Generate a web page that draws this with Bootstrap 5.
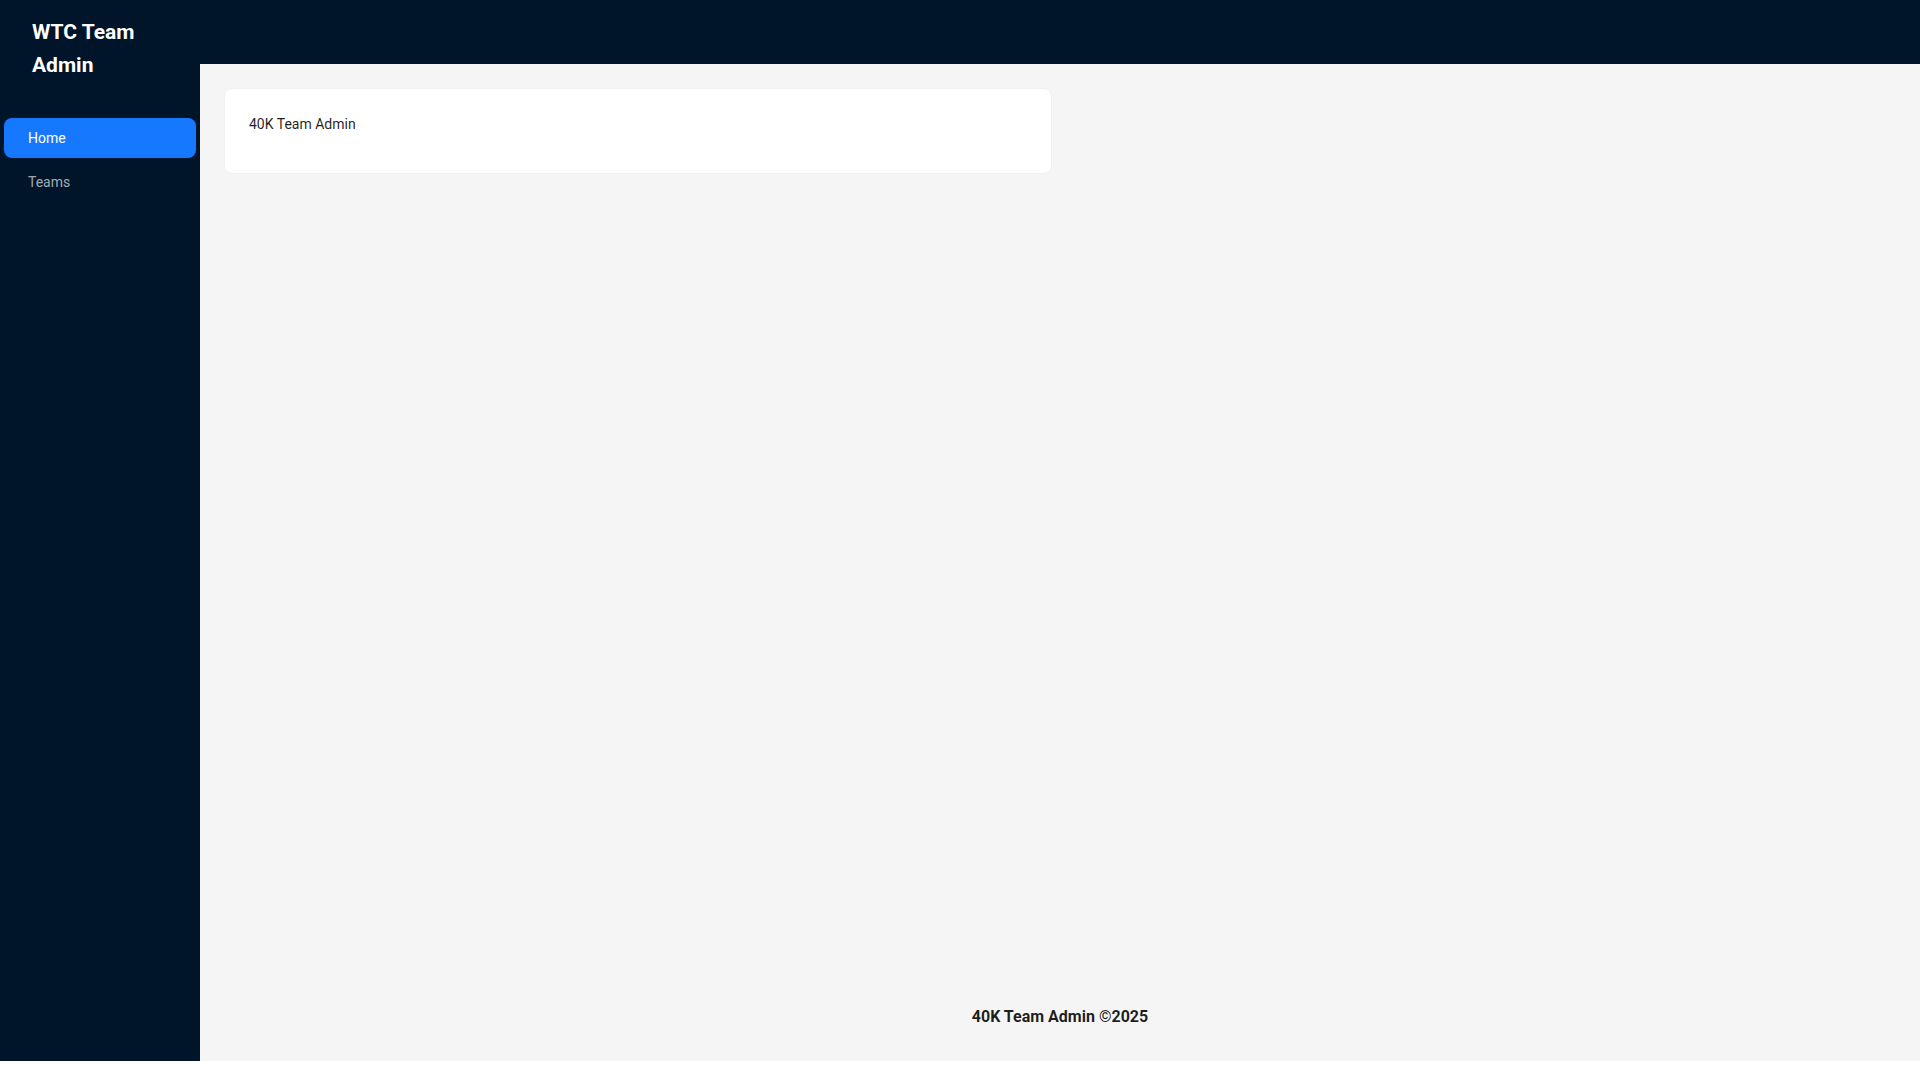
<!DOCTYPE html>
<html lang="en">
<head>
<meta charset="utf-8">
<meta name="viewport" content="width=device-width, initial-scale=1">
<title>WTC Team Admin</title>
<link href="https://cdn.jsdelivr.net/npm/bootstrap@5.3.0/dist/css/bootstrap.min.css" rel="stylesheet">
<style>
body { font-family: Roboto, "Liberation Sans", sans-serif; font-size: 14px; line-height: 22px; color: rgba(0,0,0,.88); }
.app-shell { min-height: calc(100vh - 19px); background: #f5f5f5; }
.app-sider { width: 200px; background: #001529; }
.app-brand { padding: 16px 32px; font-size: 21px; line-height: 33px; }
.app-menu { padding: 4px; margin-top: 16px; gap: 4px; }
.app-menu .nav-link { height: 40px; padding: 0 24px; line-height: 40px; border-radius: 8px; color: rgba(255,255,255,.65); }
.app-menu .nav-link.active { background: #1677ff; color: #fff; }
.app-header { height: 64px; background: #001529; }
.app-content { padding: 24px; }
.app-panel { padding: 24px; border: 1px solid #f0f0f0; border-radius: 8px; }
.app-panel p { margin-bottom: 14px; }
.app-footer { padding: 24px 48px 32px; font-size: 16px; line-height: 25px; }
</style>
</head>
<body>
<div class="app-shell d-flex">
  <aside class="app-sider flex-shrink-0">
    <div class="app-brand fw-bold text-white">WTC Team Admin</div>
    <nav class="app-menu nav flex-column" aria-label="Main">
      <a class="nav-link active" aria-current="page" href="#">Home</a>
      <a class="nav-link" href="#">Teams</a>
    </nav>
  </aside>
  <div class="d-flex flex-column flex-grow-1">
    <header class="app-header"></header>
    <main class="app-content flex-grow-1">
      <div class="row gx-3">
        <div class="col-6">
          <section class="app-panel bg-white"><p>40K Team Admin</p></section>
        </div>
      </div>
    </main>
    <footer class="app-footer text-center fw-bold">40K Team Admin ©2025</footer>
  </div>
</div>
<script src="https://cdn.jsdelivr.net/npm/bootstrap@5.3.0/dist/js/bootstrap.bundle.min.js"></script>
</body>
</html>
